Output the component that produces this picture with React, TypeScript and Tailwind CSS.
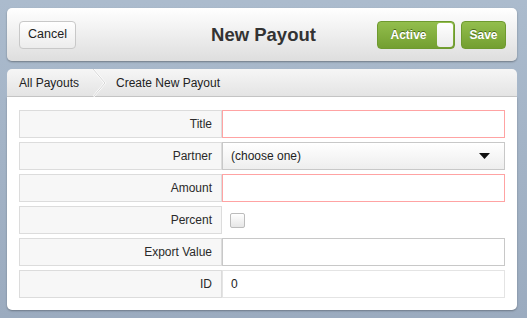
const rowLabel =
  "w-[203px] shrink-0 h-[28px] border border-[#dcdcdc] bg-[#f7f7f7] flex items-center justify-end pr-[9px] text-[12px] text-[#2a2a2a]";

function Row({ label, children }: { label: string; children?: React.ReactNode }) {
  return (
    <div className="flex h-[28px]">
      <div className={rowLabel}>{label}</div>
      <div className="flex-1 flex">{children}</div>
    </div>
  );
}

export default function App() {
  return (
    <div
      className="w-[527px] h-[318px] bg-gradient-to-b from-[#abbbcd] to-[#9babbf] pt-[8px] pl-[7px] pr-[10px]"
      style={{ fontFamily: '"Liberation Sans", Arial, sans-serif' }}
    >
      {/* header */}
      <div className="h-[53px] rounded-[5px] bg-gradient-to-b from-[#ffffff] to-[#dedede] shadow-[0_1px_2px_rgba(0,0,0,0.35)] grid grid-cols-[1fr_auto_1fr] items-center pl-[12px] pr-[11px]">
        <div>
          <button className="h-[28px] w-[57px] rounded-[4px] border border-[#c8c8c8] bg-gradient-to-b from-[#ffffff] to-[#ececec] text-[12.5px] text-[#222]">
            Cancel
          </button>
        </div>
        <div className="text-[18.5px] font-bold text-[#333] pl-[2px]">New Payout</div>
        <div className="flex gap-[6px] justify-end">
          <div className="h-[28px] w-[78px] rounded-[4px] border border-[#6e9a2f] bg-gradient-to-b from-[#93be4d] to-[#739f30] flex overflow-hidden">
            <div className="flex-1 flex items-center justify-center text-[12px] font-bold text-white [text-shadow:0_-1px_0_#4a6b1a] pl-[2px]">
              Active
            </div>
            <div className="w-[16px] bg-gradient-to-b from-[#ffffff] to-[#ececec] rounded-[3px] mr-[1px] my-[1px]"></div>
          </div>
          <button className="h-[28px] w-[45px] rounded-[4px] border border-[#6e9a2f] bg-gradient-to-b from-[#93be4d] to-[#739f30] text-[12px] font-bold text-white [text-shadow:0_-1px_0_#4a6b1a]">
            Save
          </button>
        </div>
      </div>

      {/* breadcrumb */}
      <div className="mt-[8px] h-[28px] rounded-t-[5px] bg-gradient-to-b from-[#f6f6f6] to-[#e4e4e4] border-b border-[#c8c8c8] flex items-center text-[12px] text-[#222]">
        <div className="pl-[12px] w-[86px]">All Payouts</div>
        <svg width="14" height="28" viewBox="0 0 14 28" className="shrink-0">
          <polyline points="0,0 12,14 0,28" fill="none" stroke="#ffffff" strokeWidth="2" />
          <polyline points="0,0 12,14 0,28" fill="none" stroke="#d4d4d4" strokeWidth="1" />
        </svg>
        <div className="pl-[9px]">Create New Payout</div>
      </div>

      {/* form */}
      <div className="h-[213px] bg-white rounded-b-[5px] shadow-[0_1px_2px_rgba(0,0,0,0.3)] px-[12px] pt-[13px] flex flex-col gap-[4px]">
        <Row label="Title">
          <div className="flex-1 border border-[#ffa3a3]"></div>
        </Row>
        <Row label="Partner">
          <div className="flex-1 border border-[#c8c8c8] bg-gradient-to-b from-[#ffffff] to-[#eeeeee] flex items-center justify-between pl-[8px] pr-[14px] text-[12px] text-[#222]">
            <span>(choose one)</span>
            <svg width="11" height="6" viewBox="0 0 11 6">
              <polygon points="0,0 11,0 5.5,6" fill="#111" />
            </svg>
          </div>
        </Row>
        <Row label="Amount">
          <div className="flex-1 border border-[#ffa3a3]"></div>
        </Row>
        <Row label="Percent">
          <div className="flex items-center pl-[8px]">
            <div className="w-[15px] h-[15px] rounded-[2px] border border-[#bcbcbc] bg-gradient-to-b from-[#ffffff] to-[#e6e6e6]"></div>
          </div>
        </Row>
        <Row label="Export Value">
          <div className="flex-1 border border-[#c8c8c8]"></div>
        </Row>
        <Row label="ID">
          <div className="flex-1 border border-[#e4e4e4] flex items-center pl-[8px] text-[12px] text-[#222]">0</div>
        </Row>
      </div>
    </div>
  );
}
